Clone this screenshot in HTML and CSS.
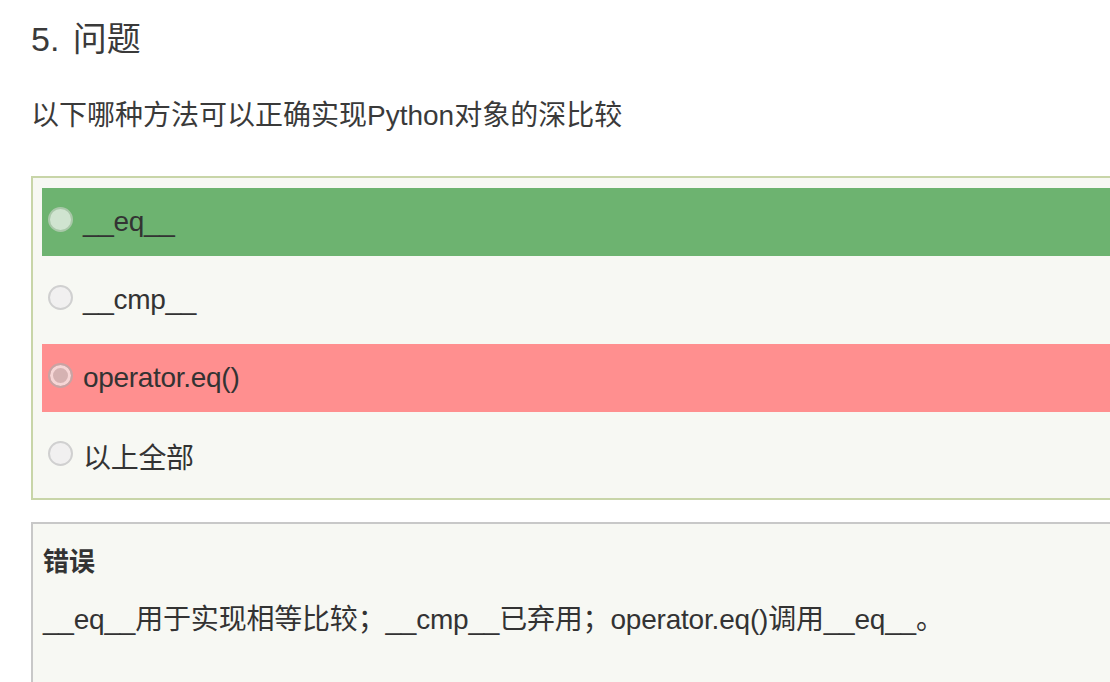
FILE: index.html
```html
<!DOCTYPE html>
<html lang="zh-CN">
<head>
<meta charset="utf-8">
<title>5. 问题</title>
<link rel="stylesheet" href="styles.css">
</head>
<body>
<div class="page">
  <h2 class="title">5. 问题</h2>
  <p class="question">以下哪种方法可以正确实现Python对象的深比较</p>
  <div class="options">
    <div class="option correct"><span class="radio"></span><span class="label">__eq__</span></div>
    <div class="option"><span class="radio"></span><span class="label">__cmp__</span></div>
    <div class="option wrong"><span class="radio checked"></span><span class="label">operator.eq()</span></div>
    <div class="option"><span class="radio"></span><span class="label">以上全部</span></div>
  </div>
  <div class="feedback">
    <div class="feedback-title">错误</div>
    <div class="feedback-text">__eq__用于实现相等比较；__cmp__已弃用；operator.eq()调用__eq__。</div>
  </div>
</div>
</body>
</html>
```
FILE: styles.css
```css
html, body {
  margin: 0;
  padding: 0;
  background: #ffffff;
  overflow: hidden;
}
body {
  font-family: "Liberation Sans", "Noto Sans CJK SC", sans-serif;
  color: #333333;
}
.page {
  padding-left: 31px;
}
.title {
  margin: 19px 0 0 0;
  font-size: 34px;
  line-height: 40px;
  font-weight: normal;
  word-spacing: 4px;
  color: #3a3a3a;
}
.question {
  margin: 37px 0 0 0;
  font-size: 28px;
  line-height: 40px;
  color: #3a3a3a;
}
.options {
  margin-top: 40px;
  border: 2px solid #c8d5a8;
  border-right: none;
  background: #f7f8f3;
  padding: 10px 0 8px 9px;
  display: flex;
  flex-direction: column;
  gap: 10px;
}
.option {
  height: 68px;
  display: flex;
  align-items: center;
  padding-left: 6px;
  font-size: 28px;
  color: #333333;
}
.option.correct {
  background: #6db370;
}
.option.wrong {
  background: #ff8f8f;
}
.label {
  letter-spacing: -0.3px;
}
.radio {
  width: 21px;
  height: 21px;
  border-radius: 50%;
  border: 2px solid #d0d0d0;
  background: #f1f0f0;
  margin-bottom: 6px;
  margin-right: 10px;
  flex: none;
}
.correct .radio {
  border-color: #a9c8a9;
  background: #d0e4d0;
}
.radio.checked {
  border-color: #c9a3a3;
  background: #d5b2b2;
  box-shadow: inset 0 0 0 3px #f6d6d6;
}
.feedback {
  margin-top: 22px;
  border: 2px solid #c8c8c8;
  border-right: none;
  border-bottom: none;
  background: #f7f8f3;
  padding: 20px 0 60px 10px;
}
.feedback-title {
  font-size: 26px;
  line-height: 36px;
  font-weight: bold;
  color: #333333;
}
.feedback-text {
  margin-top: 20px;
  font-size: 28px;
  line-height: 40px;
  letter-spacing: -0.2px;
  color: #333333;
}
```
